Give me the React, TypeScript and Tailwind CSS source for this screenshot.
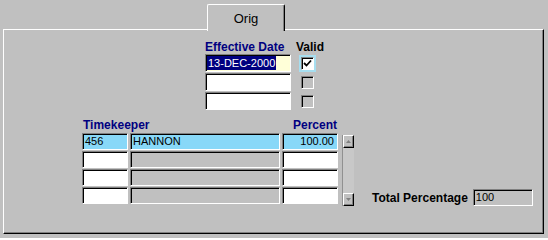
import React from 'react';

const font = "font-['Liberation_Sans',Arial,sans-serif]";

// sunken field look: grey/black top-left, white bottom-right
const sunken =
  'border border-t-[#808080] border-l-[#808080] border-b-white border-r-white shadow-[inset_1px_1px_0_#000]';

const Field = ({
  className = '',
  children,
  align = 'left',
}: {
  className?: string;
  children?: React.ReactNode;
  align?: 'left' | 'right';
}) => (
  <div
    className={`${sunken} flex items-center text-[11px] leading-none text-black ${
      align === 'right' ? 'justify-end pr-[3px]' : 'pl-[2px]'
    } ${className}`}
  >
    {children}
  </div>
);

const CheckBox = ({ checked = false, focused = false }: { checked?: boolean; focused?: boolean }) => (
  <div
    className={`w-[17px] h-[17px] flex items-center justify-center ${
      focused ? 'bg-[#a6def0]' : ''
    }`}
  >
    <div
      className={`w-[13px] h-[13px] ${sunken} ${
        checked ? 'bg-white' : 'bg-[#c0c0c0]'
      } flex items-center justify-center`}
    >
      {checked && (
        <svg width="9" height="9" viewBox="0 0 9 9">
          <path d="M1 4 L3.5 6.5 L8 1.5" stroke="#000" strokeWidth="1.8" fill="none" />
        </svg>
      )}
    </div>
  </div>
);

const ScrollButton = ({ dir }: { dir: 'up' | 'down' }) => (
  <div className="h-[13px] w-full bg-[#c0c0c0] border border-t-white border-l-white border-b-black border-r-black shadow-[inset_-1px_-1px_0_#808080] flex items-center justify-center">
    <svg width="5" height="3" viewBox="0 0 5 3">
      {dir === 'up' ? (
        <path d="M0 3 L2.5 0 L5 3 Z" fill="#808080" />
      ) : (
        <path d="M0 0 L2.5 3 L5 0 Z" fill="#808080" />
      )}
    </svg>
  </div>
);

const rows = [
  { id: '456', name: 'HANNON', pct: '100.00', active: true },
  { id: '', name: '', pct: '', active: false },
  { id: '', name: '', pct: '', active: false },
  { id: '', name: '', pct: '', active: false },
];

export default function App() {
  return (
    <div className={`${font} w-[548px] h-[238px] bg-[#c0c0c0] pt-[4px] pl-[3px] overflow-hidden`}>
      {/* tab strip */}
      <div className="flex">
        <div className="ml-[204px] w-[78px] h-[27px] -mb-[2px] relative z-10 bg-[#c0c0c0] border-t border-l border-r border-t-white border-l-white border-r-black rounded-t-[2px] shadow-[inset_-1px_0_0_#808080] flex items-center justify-center">
          <span className="text-[13px] text-black mt-[1px]">Orig</span>
        </div>
      </div>

      {/* tab page */}
      <div className="w-[541px] h-[205px] border border-t-white border-l-white border-r-black border-b-black shadow-[inset_-1px_-1px_0_#808080] flex flex-col">
        {/* effective date block */}
        <div className="ml-[201px] mt-[11px] flex gap-[5px]">
          <div className="flex flex-col">
            <div className="h-[13px] text-[12px] font-bold leading-none text-[#000080]">Effective Date</div>
            <div className="flex flex-col gap-[1px]">
              <Field className="w-[86px] h-[18px] bg-[#ffffd8] !pl-[1px]">
                <span className="bg-[#000080] text-white px-[1px] leading-[14px]">13-DEC-2000</span>
              </Field>
              <Field className="w-[86px] h-[18px] bg-white" />
              <Field className="w-[86px] h-[18px] bg-white" />
            </div>
          </div>
          <div className="flex flex-col">
            <div className="h-[13px] text-[12px] font-bold leading-none text-black">Valid</div>
            <div className="flex flex-col gap-[1px] pl-[3px]">
              <div className="h-[18px] flex items-center">
                <CheckBox checked focused />
              </div>
              <div className="h-[18px] flex items-center">
                <CheckBox />
              </div>
              <div className="h-[18px] flex items-center">
                <CheckBox />
              </div>
            </div>
          </div>
        </div>

        {/* timekeeper block + total */}
        <div className="ml-[78px] mt-[9px] flex items-end">
          <div className="flex flex-col">
            <div className="h-[14px] flex justify-between w-[256px] text-[12px] font-bold leading-none text-[#000080]">
              <span className="pl-[1px]">Timekeeper</span>
              <span className="pr-[1px]">Percent</span>
            </div>
            <div className="flex gap-[4px]">
              <div className="flex flex-col gap-[1px]">
                {rows.map((r, i) => (
                  <div key={i} className="flex gap-[2px]">
                    <Field className={`w-[46px] h-[17px] ${r.active ? 'bg-[#88d8f8]' : 'bg-white'}`}>
                      {r.id}
                    </Field>
                    <Field className={`w-[150px] h-[17px] ${r.active ? 'bg-[#88d8f8]' : 'bg-[#c0c0c0]'}`}>
                      {r.name}
                    </Field>
                    <Field
                      align="right"
                      className={`w-[56px] h-[17px] ${r.active ? 'bg-[#88d8f8]' : 'bg-white'}`}
                    >
                      {r.pct}
                    </Field>
                  </div>
                ))}
              </div>
              <div className="w-[12px] h-[71px] mt-[2px] flex flex-col bg-[#c8c8c8] border-l border-[#909090]">
                <ScrollButton dir="up" />
                <div className="flex-1" />
                <ScrollButton dir="down" />
              </div>
            </div>
          </div>

          <div className="ml-[18px] flex items-center gap-[5px]">
            <span className="text-[12px] font-bold leading-none text-black">Total Percentage</span>
            <Field className="w-[60px] h-[17px] bg-[#c0c0c0]">100</Field>
          </div>
        </div>
      </div>
    </div>
  );
}
